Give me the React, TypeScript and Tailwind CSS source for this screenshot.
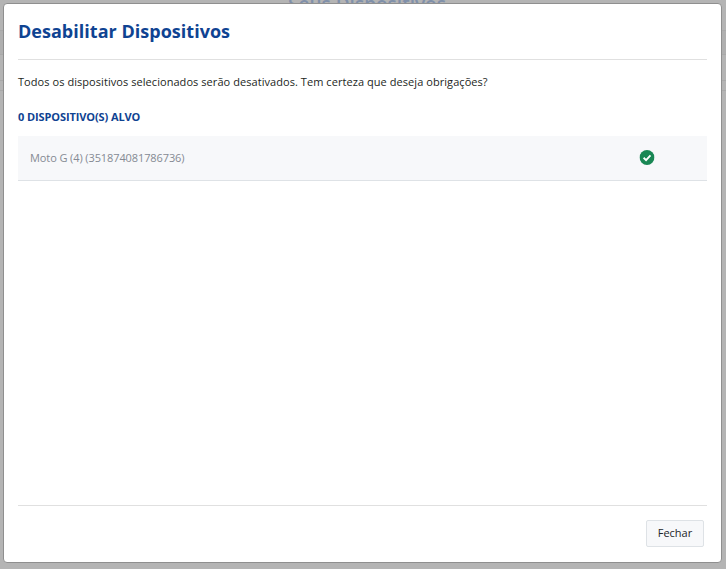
export default function App() {
  return (
    <div className="relative h-[569px] w-[726px] overflow-hidden bg-[#b4b4b4] pt-[3px] pl-[3px] pr-[3px] pb-[6px] font-['Open_Sans','Noto_Sans',sans-serif]">
      <div className="absolute left-[8px] right-0 top-[-10px] text-center text-[19px] font-semibold text-[#8090aa]">Seus Dispositivos</div>
      <div className="absolute left-0 right-0 top-[30px] h-[25px] border-y border-[#a9a9a9] bg-[#afafaf]" />
      <div className="absolute left-0 right-0 top-[80px] h-[11px] border-y border-[#a9a9a9]" />
      <div className="relative flex h-full w-[719px] flex-col rounded-[4px] border border-[#8f8f8f] bg-white px-[14px]">
        <div className="flex h-[56px] shrink-0 items-center border-b border-[#e0e0e0] pb-[2px]">
          <h1 className="text-[18px] font-bold leading-[24px] tracking-[0.02px] text-[#0f4392]">Desabilitar Dispositivos</h1>
        </div>
        <p className="mt-[14px] text-[11px] leading-[16px] tracking-[0.06px] text-[#1c1f23]">Todos os dispositivos selecionados serão desativados. Tem certeza que deseja obrigações?</p>
        <p className="mt-[19px] text-[11px] font-bold leading-[16px] tracking-[-0.1px] text-[#0f4392]">0 DISPOSITIVO(S) ALVO</p>
        <div className="mt-[11px] flex h-[45px] items-center justify-between border-b border-[#dee2e6] bg-[#f7f8fa] pl-[12px] pr-[52px]">
          <span className="text-[11px] tracking-[-0.1px] text-[#858a93]">Moto G (4) (351874081786736)</span>
          <svg className="-mt-[2px] -translate-x-[0.5px]" width="15" height="15" viewBox="0 0 16 16" aria-hidden="true">
            <circle cx="8" cy="8" r="8" fill="#198754" />
            <path d="M4.4 8.3 7 10.8 11.7 5.8" fill="none" stroke="#fff" strokeWidth="2" />
          </svg>
        </div>
        <div className="flex-1" />
        <div className="flex h-[57px] shrink-0 items-center justify-end border-t border-[#e0e0e0] pr-[3px]">
          <button className="h-[27px] w-[58px] -translate-y-[1px] rounded-[2px] border border-[#dee2e6] bg-[#f7f8fa] text-[11px] text-[#212529]">Fechar</button>
        </div>
      </div>
    </div>
  );
}
